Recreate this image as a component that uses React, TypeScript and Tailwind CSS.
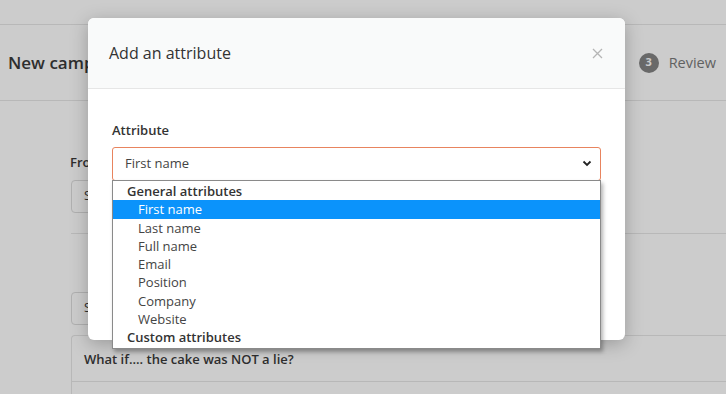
import React from 'react';

const options = ['First name', 'Last name', 'Full name', 'Email', 'Position', 'Company', 'Website'];

const App: React.FC = () => {
  return (
    <div className="relative h-[394px] w-[726px] overflow-hidden bg-white text-[#3a3a3a]" style={{ fontFamily: '"Open Sans", sans-serif' }}>
      {/* Page behind the modal */}
      <div className="h-[25px] border-b border-[#e6e6e6]" />
      <div className="flex h-[76px] items-center justify-between border-b border-[#e6e6e6] pl-2 pr-[10px]">
        <h1 className="text-[17px] font-semibold">New campaign</h1>
        <div className="flex items-center gap-[10px]">
          <span className="flex h-5 w-5 items-center justify-center rounded-full bg-[#848484] text-[11px] font-bold text-white">3</span>
          <span className="text-[14.5px] text-[#7a7a7a]">Review</span>
        </div>
      </div>
      <div className="pl-[71px] pt-[52px]">
        <div className="-ml-px mb-[7px] text-[13px] font-semibold">From</div>
        <div className="flex h-[33px] w-[300px] items-center rounded border border-[#dcdcdc] px-3 text-[13px]">Select…</div>
        <div className="mt-[20px] border-t border-[#e6e6e6]" />
        <div className="mt-[58px] flex h-[33px] w-[300px] items-center rounded border border-[#dcdcdc] px-3 text-[13px]">Select…</div>
        <div className="mt-[10px] rounded-tl border-l border-t border-[#e6e6e6]">
          <div className="flex h-[46px] items-center border-b border-[#e6e6e6] px-3 pt-[3px] text-[13px] font-semibold">What if.... the cake was NOT a lie?</div>
          <div className="h-[20px]" />
        </div>
      </div>

      {/* Backdrop */}
      <div className="absolute inset-0 bg-black/20" />

      {/* Modal */}
      <div className="absolute left-[88px] top-[18px] h-[322px] w-[537px] rounded-[6px] bg-white shadow-[0_4px_18px_rgba(0,0,0,0.25)]">
        <div className="flex h-[71px] items-center justify-between rounded-t-[6px] border-b border-[#e6e6e6] bg-[#f9fafa] pl-[21px] pr-[22px]">
          <h2 className="text-[16px] font-medium text-[#333]">Add an attribute</h2>
          <svg width="11" height="11" viewBox="0 0 11 11" className="text-[#b5b5b5]">
            <path d="M1 1l9 9M10 1l-9 9" stroke="currentColor" strokeWidth="1.3" />
          </svg>
        </div>
        <div className="relative px-6 pt-[32px]">
          <label className="block text-[13px] font-semibold text-[#333]">Attribute</label>
          <div className="mt-[6px] flex h-[34px] items-center justify-between rounded-[3px] border border-[#e8845e] pl-3 pr-[8px] text-[13px] text-[#444]">
            <span className="pt-px">First name</span>
            <svg width="10" height="7" viewBox="0 0 10 7">
              <path d="M1.5 1.5l3.5 3.5 3.5-3.5" fill="none" stroke="#222" strokeWidth="1.8" />
            </svg>
          </div>

          {/* Open dropdown */}
          <div className="absolute left-6 right-6 top-[91px] z-10 border border-[#8a8a8a] bg-white pb-[2px] text-[13px] leading-[18.25px] text-[#444] shadow-[2px_3px_4px_rgba(0,0,0,0.3)]">
            <div className="pl-[14px] pt-px font-semibold text-[#333]">General attributes</div>
            {options.map((o, i) => (
              <div key={o} className={i === 0 ? 'bg-[#0b93fb] pl-[25px] text-white' : 'pl-[25px]'}>
                {o}
              </div>
            ))}
            <div className="pl-[14px] font-semibold text-[#333]">Custom attributes</div>
          </div>
        </div>
      </div>
    </div>
  );
};

export default App;
